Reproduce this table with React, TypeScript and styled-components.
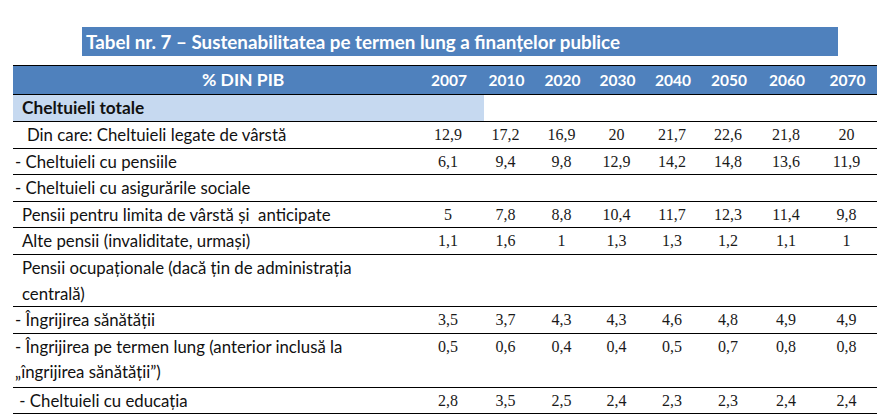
import React from 'react';
import styled, { createGlobalStyle } from 'styled-components';

const GlobalStyle = createGlobalStyle`
  html, body {
    margin: 0;
    padding: 0;
    background: #ffffff;
  }
  body {
    font-family: Lato, "Liberation Sans", sans-serif;
    color: #111111;
  }
`;

const Page = styled.div`
  width: 888px;
  height: 417px;
  padding: 27px 0 0 13px;
  box-sizing: border-box;
  overflow: hidden;
`;

const TitleBar = styled.div`
  margin-left: 69px;
  width: 756px;
  height: 29px;
  background: #4f81bd;
  color: #ffffff;
  font-weight: 700;
  font-size: 18.8px;
  line-height: 29px;
  padding-left: 4px;
  box-sizing: border-box;
  white-space: nowrap;
`;

const Table = styled.div`
  margin-top: 9px;
  width: 864px;
  display: grid;
  grid-template-columns: 406px 58px 57px 55px 55px 56px 56px 60px 61px;
  border-top: 1px solid #000000;
`;

const Row = styled.div`
  display: contents;
`;

const HeadCell = styled.div`
  background: #4f81bd;
  color: #ffffff;
  font-weight: 700;
  font-size: 15.5px;
  height: 28px;
  line-height: 28px;
  text-align: center;
  border-bottom: 1px solid #000000;
  padding-left: 2px;
`;

const HeadLabel = styled(HeadCell)`
  font-size: 17.5px;
  text-align: left;
  padding-left: 189px;
  white-space: nowrap;
`;

const SectionCell = styled.div`
  grid-column: 1 / -1;
  height: 26px;
  border-bottom: 1px solid #000000;
`;

const SectionBand = styled.div`
  width: 471px;
  height: 100%;
  background: #c6d9f0;
  font-weight: 700;
  font-size: 17.3px;
  line-height: 26px;
  padding-left: 9px;
  box-sizing: border-box;
`;

const LabelCell = styled.div<{ $indent: number; $height: number }>`
  font-size: 16.8px;
  line-height: 25.6px;
  min-height: ${({ $height }) => $height}px;
  padding-left: ${({ $indent }) => $indent}px;
  padding-right: 40px;
  border-bottom: 1px solid #000000;
  white-space: pre-wrap;
`;

const NumCell = styled.div`
  font-family: "Liberation Serif", serif;
  font-size: 16px;
  line-height: 25.6px;
  text-align: center;
  color: #1a1a1a;
  border-bottom: 1px solid #000000;
`;

type DataRow = {
  label: string;
  indent: number;
  height: number;
  values: string[];
};

const years = ['2007', '2010', '2020', '2030', '2040', '2050', '2060', '2070'];

const rows: DataRow[] = [
  { label: 'Din care: Cheltuieli legate de vârstă', indent: 14, height: 25.6, values: ['12,9', '17,2', '16,9', '20', '21,7', '22,6', '21,8', '20'] },
  { label: '- Cheltuieli cu pensiile', indent: 2, height: 25.6, values: ['6,1', '9,4', '9,8', '12,9', '14,2', '14,8', '13,6', '11,9'] },
  { label: '- Cheltuieli cu asigurările sociale', indent: 2, height: 25.6, values: [] },
  { label: 'Pensii pentru limita de vârstă și  anticipate', indent: 9, height: 25.6, values: ['5', '7,8', '8,8', '10,4', '11,7', '12,3', '11,4', '9,8'] },
  { label: 'Alte pensii (invaliditate, urmași)', indent: 9, height: 25.6, values: ['1,1', '1,6', '1', '1,3', '1,3', '1,2', '1,1', '1'] },
  { label: 'Pensii ocupaționale (dacă țin de administrația centrală)', indent: 9, height: 51, values: [] },
  { label: '- Îngrijirea sănătății', indent: 2, height: 25.6, values: ['3,5', '3,7', '4,3', '4,3', '4,6', '4,8', '4,9', '4,9'] },
  { label: '- Îngrijirea pe termen lung (anterior inclusă la „îngrijirea sănătății”)', indent: 2, height: 53, values: ['0,5', '0,6', '0,4', '0,4', '0,5', '0,7', '0,8', '0,8'] },
  { label: ' - Cheltuieli cu educația', indent: 2, height: 24.6, values: ['2,8', '3,5', '2,5', '2,4', '2,3', '2,3', '2,4', '2,4'] },
];

const App: React.FC = () => {
  return (
    <Page>
      <GlobalStyle />
      <TitleBar>Tabel nr. 7 – Sustenabilitatea pe termen lung a finanțelor publice</TitleBar>

      <Table>
        <Row>
          <HeadLabel>% DIN PIB</HeadLabel>
          {years.map((year) => (
            <HeadCell key={year}>{year}</HeadCell>
          ))}
        </Row>

        <SectionCell>
          <SectionBand>Cheltuieli totale</SectionBand>
        </SectionCell>

        {rows.map((row) => (
          <Row key={row.label}>
            <LabelCell $indent={row.indent} $height={row.height}>
              {row.label}
            </LabelCell>
            {years.map((year, i) => (
              <NumCell key={year}>{row.values[i] ?? ''}</NumCell>
            ))}
          </Row>
        ))}
      </Table>
    </Page>
  );
};

export default App;
